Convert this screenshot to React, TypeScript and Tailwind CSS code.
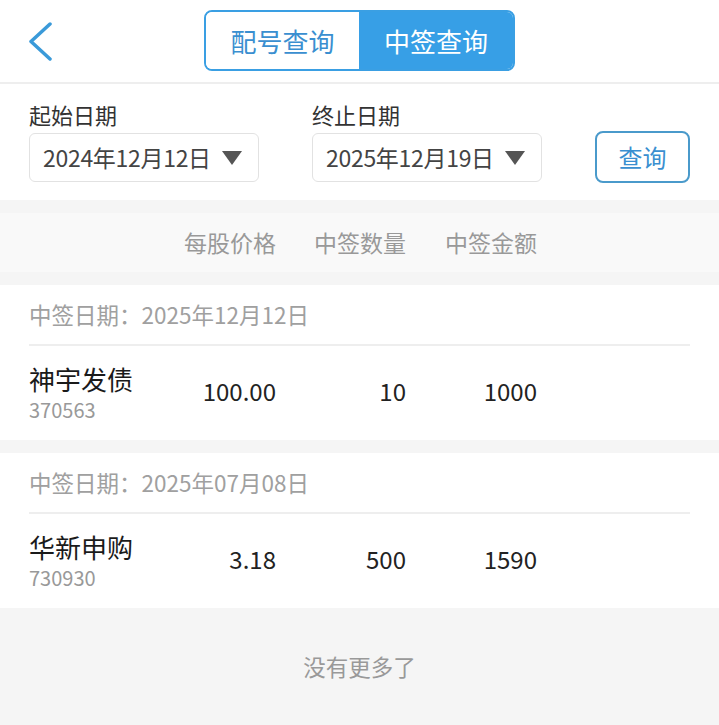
const rows = [
  { date: '2025年12月12日', name: '神宇发债', code: '370563', price: '100.00', qty: '10', amount: '1000' },
  { date: '2025年07月08日', name: '华新申购', code: '730930', price: '3.18', qty: '500', amount: '1590' },
];

const font = { fontFamily: "'Noto Sans CJK SC', 'Noto Sans', sans-serif" };

const Caret = () => (
  <svg width="20" height="14" viewBox="0 0 20 14" className="shrink-0">
    <path d="M0 0 H20 L10 14 Z" fill="#555555" />
  </svg>
);

const DateBox = ({ label, value }: { label: string; value: string }) => (
  <div className="flex flex-col w-[230px]">
    <span className="text-[22px] leading-[30px] text-[#333]">{label}</span>
    <div className="mt-[4px] h-[49px] rounded-md border border-[#e2e2e2] flex items-center justify-between pl-[13px] pr-[16px]">
      <span className="text-[23px] text-[#444] tracking-[-0.3px]">{value}</span>
      <Caret />
    </div>
  </div>
);

export default function App() {
  return (
    <div className="w-[719px] min-h-[725px] bg-[#f5f5f5]" style={font}>
      {/* top bar */}
      <div className="bg-white h-[84px] border-b-2 border-[#eeeeee] grid grid-cols-[1fr_auto_1fr] items-center">
        <div className="pl-[27px]">
          <svg width="26" height="40" viewBox="0 0 26 40">
            <path d="M23 3 L4 20.5 L23 38" fill="none" stroke="#3a9ad9" strokeWidth="3.5" strokeLinecap="round" strokeLinejoin="round" />
          </svg>
        </div>
        <div className="flex w-[311px] h-[61px] mt-[-1px] rounded-lg border-2 border-[#3a9fe3] overflow-hidden">
          <div className="w-[153px] flex items-center justify-center text-[26px] text-[#3a8fd0] bg-white">配号查询</div>
          <div className="flex-1 flex items-center justify-center text-[26px] text-white bg-[#379fe6]">中签查询</div>
        </div>
        <div />
      </div>

      {/* filters */}
      <div className="bg-white flex items-end px-[29px] pt-[15px] pb-[18px]">
        <DateBox label="起始日期" value="2024年12月12日" />
        <div className="w-[53px]" />
        <DateBox label="终止日期" value="2025年12月19日" />
        <button className="ml-auto mb-[-1px] w-[95px] h-[52px] rounded-lg border-2 border-[#4a9acb] text-[24px] text-[#3a8fd0] bg-white">查询</button>
      </div>

      {/* column header */}
      <div className="mt-[13px] h-[59px] bg-[#f9f9f9] grid grid-cols-[155px_92px_130px_131px] items-center px-[29px] text-[23px] text-[#999]">
        <span />
        <span className="text-right">每股价格</span>
        <span className="text-right">中签数量</span>
        <span className="text-right">中签金额</span>
      </div>

      {rows.map((r) => (
        <div key={r.code} className="mt-[13px] bg-white">
          <div className="h-[59px] flex items-center px-[29px] text-[22.5px] text-[#a0a0a0]">中签日期：{r.date}</div>
          <div className="mx-[29px] h-[2px] bg-[#eeeeee]" />
          <div className="h-[94px] grid grid-cols-[155px_92px_130px_131px] items-center px-[29px]">
            <div className="flex flex-col">
              <span className="text-[26px] leading-[30px] text-[#1a1a1a]">{r.name}</span>
              <span className="mt-[4px] text-[20px] leading-[24px] text-[#999]">{r.code}</span>
            </div>
            <span className="mb-[5px] text-right text-[24px] text-[#222]">{r.price}</span>
            <span className="mb-[5px] text-right text-[24px] text-[#222]">{r.qty}</span>
            <span className="mb-[5px] text-right text-[24px] text-[#222]">{r.amount}</span>
          </div>
        </div>
      ))}

      <div className="h-[117px] flex items-center justify-center text-[22.5px] text-[#999]">没有更多了</div>
    </div>
  );
}
